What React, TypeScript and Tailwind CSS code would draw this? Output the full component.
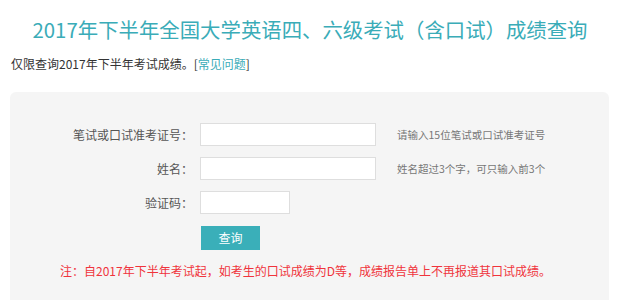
import React from "react";

const font = { fontFamily: '"Noto Sans CJK SC", "Noto Sans", sans-serif' };

function Row({ label, hint, short }: { label: string; hint?: string; short?: boolean }) {
  return (
    <div className="flex items-center h-[23px]">
      <div className="w-[183px] text-right text-[12px] text-[#555] leading-[23px] shrink-0">{label}</div>
      <input
        className={`ml-[7px] h-[23px] bg-white border border-[#dedede] outline-none ${short ? "w-[90px]" : "w-[176px]"}`}
      />
      {hint && <div className="ml-[21px] text-[10.5px] text-[#777] leading-[23px]">{hint}</div>}
    </div>
  );
}

export default function App() {
  return (
    <div className="w-[620px] h-[300px] overflow-hidden bg-white" style={font}>
      <h1 className="mt-[15px] text-center text-[20.4px] leading-[28px] text-[#3aacb8] font-normal">
        2017年下半年全国大学英语四、六级考试（含口试）成绩查询
      </h1>
      <p className="mt-[12px] ml-[11px] text-[12px] leading-[18px] text-[#333]">
        仅限查询2017年下半年考试成绩。[<span className="text-[#3aacb8]">常见问题</span>]
      </p>
      <div className="mt-[19px] ml-[10px] w-[599px] h-[230px] bg-[#f5f5f5] rounded-[6px] pt-[31px]">
        <div className="flex flex-col gap-[11px]">
          <Row label="笔试或口试准考证号：" hint="请输入15位笔试或口试准考证号" />
          <Row label="姓名：" hint="姓名超过3个字，可只输入前3个" />
          <Row label="验证码：" short />
        </div>
        <div className="mt-[10px] ml-[191px]">
          <button className="w-[59px] h-[24px] bg-[#3aafb9] text-white text-[12px] leading-[24px]">查询</button>
        </div>
        <p className="mt-[12px] text-center text-[12px] leading-[18px] text-[#f0343c] pr-[8px]">
          注：自2017年下半年考试起，如考生的口试成绩为D等，成绩报告单上不再报道其口试成绩。
        </p>
      </div>
    </div>
  );
}
